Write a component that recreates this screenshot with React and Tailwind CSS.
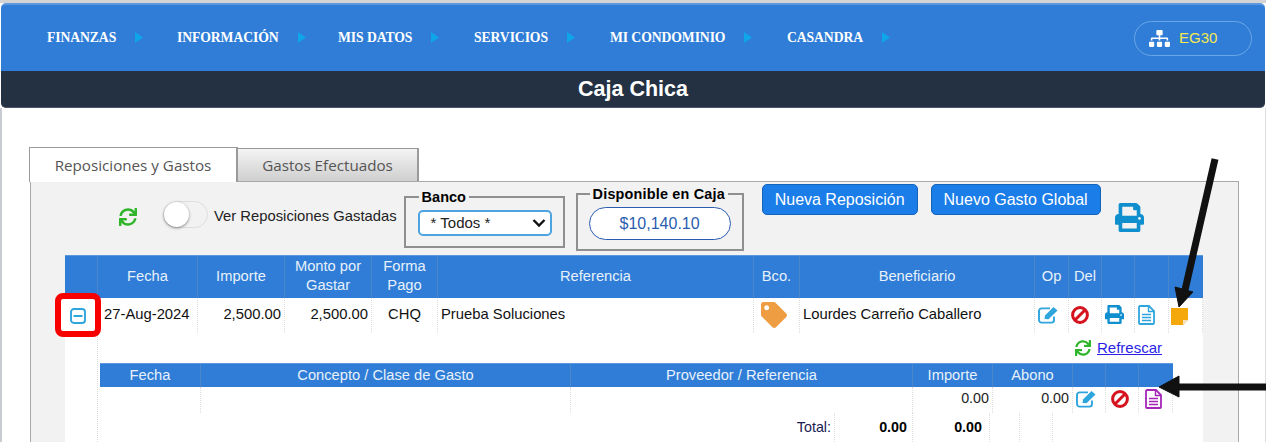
import React from "react";
import { FaSync, FaSitemap, FaPrint, FaTag } from "react-icons/fa";

const nav = [
  ["FINANZAS", "w-[130px]"],
  ["INFORMACIÓN", "w-[161px]"],
  ["MIS DATOS", "w-[136px]"],
  ["SERVICIOS", "w-[136px]"],
  ["MI CONDOMINIO", "w-[177px]"],
  ["CASANDRA", "w-[110px]"],
];

const div = "border-r border-dotted border-[#dcdcdc] pb-[2px]";
const hdiv = "border-r border-[#4a86c9] flex items-center justify-center text-center pb-[2px]";

function Head({ children, cls = "" }) {
  return <div className={`${hdiv} ${cls}`}>{children}</div>;
}

function Cell({ children, cls = "" }) {
  return <div className={`${div} flex items-center ${cls}`}>{children}</div>;
}

function EditIcon({ cls = "" }) {
  return (
    <svg width="21" height="18" viewBox="0 0 21 18" className={`text-[#2fa5dd] ${cls}`}>
      <path d="M16 10.5V14a2.6 2.6 0 0 1-2.6 2.6H3.6A2.6 2.6 0 0 1 1 14V5a2.6 2.6 0 0 1 2.6-2.6H12" fill="none" stroke="currentColor" strokeWidth="1.9" />
      <path d="M6.5 13L7 9.5L15.5 1L19.5 4.5L10.5 13.2Z" fill="currentColor" />
    </svg>
  );
}

function BanIcon({ cls = "" }) {
  return (
    <svg width="18" height="18" viewBox="0 0 18 18" className={`text-[#d5121e] ${cls}`}>
      <circle cx="9" cy="9" r="7.4" fill="none" stroke="currentColor" strokeWidth="3" />
      <path d="M4 14L14 4" stroke="currentColor" strokeWidth="3" />
    </svg>
  );
}

function FileIcon({ cls = "" }) {
  return (
    <svg width="17" height="20" viewBox="0 0 17 20" className={cls}>
      <path d="M1.9 1H11L16 6V18A1 1 0 0 1 15 19H2A1 1 0 0 1 1 18V1.9Z" fill="none" stroke="currentColor" strokeWidth="1.8" />
      <path d="M10.5 1V6.5H16" fill="none" stroke="currentColor" strokeWidth="1.4" />
      <path d="M4 9.5H13M4 12.5H13M4 15.5H13" stroke="currentColor" strokeWidth="1.5" />
    </svg>
  );
}

export default function App() {
  return (
    <div className="relative w-[1266px] h-[442px] overflow-hidden bg-white text-[14.8px] text-[#1a1a2a] font-['Liberation_Sans',Arial,sans-serif]">
      <div className="h-[3px] bg-[#d4d4d4]" />
      <div className="mx-px">
        <div className="h-[68px] flex items-center pl-[46px] pr-[13px] bg-[#2f7dd6] rounded-t-[5px] border-t-2 border-[#5b98df]">
          {nav.map(([t, w]) => (
            <div key={t} className={`${w} flex items-center text-white font-bold text-[13.7px] tracking-[-0.1px] font-['Liberation_Serif',serif]`}>
              <span>{t}</span>
              <svg width="8" height="11" viewBox="0 0 8 11" className="ml-[19px]">
                <path d="M0 0L8 5.5L0 11Z" fill="#0ea5e9" />
              </svg>
            </div>
          ))}
          <div className="ml-auto w-[118px] h-[35px] border border-[#6ba6e8] rounded-full flex items-center pl-[14px] gap-[9px]">
            <FaSitemap className="text-white text-[21px]" />
            <span className="text-[#f5e94f] text-[15px] mt-[1px]">EG30</span>
          </div>
        </div>
        <div className="h-[37px] bg-[#233143] rounded-b-[5px] border-b border-[#4a5566] flex items-center justify-center text-white font-bold text-[21.5px]">
          Caja Chica
        </div>
      </div>

      <div className="border-l-2 border-[#c9ccd2] border-r border-r-[#dddddd] h-[334px] pl-[27px] pr-[27px]">
        <div className="flex items-end pt-[38px] h-[73px]">
          <div className="w-[209px] h-[35px] bg-white border-t border-l border-r-2 border-[#9a9a9a] flex items-center justify-center text-[15.2px] text-[#555] font-['Open_Sans',sans-serif] relative z-10 mb-[-1px]">
            Reposiciones y Gastos
          </div>
          <div className="w-[181px] h-[33px] bg-gradient-to-b from-[#f4f4f4] to-[#cfcfcf] border-t border-r-2 border-[#9a9a9a] flex items-center justify-center text-[15.2px] text-[#555] font-['Open_Sans',sans-serif]">
            Gastos Efectuados
          </div>
        </div>

        <div className="w-[1209px] h-[262px] bg-[#f2f2f2] border border-[#a9a9a9] border-b-0 ml-px">
          <div className="flex items-start h-[73px]">
            <FaSync className="ml-[88px] mt-[26px] text-[#2fb52a] text-[18px] shrink-0" />
            <div className="ml-[26px] mt-[19px] w-[45px] h-[27px] rounded-full border border-[#dddddd] bg-[#f2f2f2] relative shrink-0">
              <div className="absolute left-0 top-0 w-[25px] h-[25px] rounded-full bg-white shadow-[0_1px_3px_rgba(0,0,0,0.45)]" />
            </div>
            <span className="ml-[6px] mt-[23px] whitespace-nowrap text-[#222]">Ver Reposiciones Gastadas</span>

            <fieldset className="ml-[7px] mt-[7px] w-[161px] h-[59px] border-2 border-[#8f8f8f] pl-[12px] pr-[11px]">
              <legend className="px-[3px] ml-[1px] font-bold text-[14.5px] leading-[16px] text-black">Banco</legend>
              <div className="mt-[5px] h-[26px] bg-white border-2 border-[#4da3e0] rounded-[5px] flex items-center justify-between pl-[11px] pr-[4px] text-[15px] text-[#222]">
                <span>* Todos *</span>
                <svg width="14" height="10" viewBox="0 0 14 10"><path d="M1.5 2 L7 7.5 L12.5 2" fill="none" stroke="#111" strokeWidth="2.4" /></svg>
              </div>
            </fieldset>

            <fieldset className="ml-[11px] mt-[4px] w-[168px] h-[65px] border-2 border-[#8f8f8f] px-[11px]">
              <legend className="px-[3px] ml-[1px] font-bold text-[14.4px] leading-[16px] text-black tracking-[0.2px] whitespace-nowrap">Disponible en Caja</legend>
              <div className="mt-[5px] h-[33px] bg-white border-[1.5px] border-[#2a5db0] rounded-full flex items-center justify-center text-[16px] text-[#2a5db0]">
                $10,140.10
              </div>
            </fieldset>

            <div className="ml-[18px] mt-[2px] w-[156px] h-[31px] bg-[#1a7de8] border border-[#1564bb] rounded-[5px] flex items-center justify-center text-white text-[16px]">
              Nueva Reposición
            </div>
            <div className="ml-[13px] mt-[2px] w-[170px] h-[31px] bg-[#1a7de8] border border-[#1564bb] rounded-[5px] flex items-center justify-center text-white text-[16px]">
              Nuevo Gasto Global
            </div>
            <FaPrint className="ml-[14px] mt-[21px] text-[#0f8fce] text-[29px] shrink-0" />
          </div>

          <div className="ml-[34px] w-[1138px] bg-white h-[189px]">
            <div className="grid grid-cols-[33px_100px_87px_87px_66px_316px_46px_235px_34px_33px_33px_34px_34px] h-[43px] bg-[#2f7dd6] border-t border-[#5b98df] text-[#e8f1fb] text-[14.7px] leading-[19px]">
              <Head />
              <Head>Fecha</Head>
              <Head>Importe</Head>
              <Head>Monto por<br />Gastar</Head>
              <Head>Forma<br />Pago</Head>
              <Head>Referencia</Head>
              <Head>Bco.</Head>
              <Head>Beneficiario</Head>
              <Head>Op</Head>
              <Head>Del</Head>
              <Head />
              <Head />
              <div />
            </div>

            <div className="grid grid-cols-[33px_100px_87px_87px_66px_316px_46px_235px_34px_33px_33px_34px_34px] h-[35px] text-[#111]">
              <div className="flex items-center pl-[5px]">
                <svg width="16" height="16" viewBox="0 0 16 16" className="relative z-10 text-[#2fa5dd]">
                  <rect x="1" y="1" width="14" height="14" rx="3" fill="none" stroke="currentColor" strokeWidth="1.9" />
                  <path d="M3.5 8H12.5" stroke="currentColor" strokeWidth="2" />
                </svg>
              </div>
              <Cell cls="pl-[6px]">27-Aug-2024</Cell>
              <Cell cls="justify-end pr-[3px]">2,500.00</Cell>
              <Cell cls="justify-end pr-[3px]">2,500.00</Cell>
              <Cell cls="justify-center">CHQ</Cell>
              <Cell cls="pl-[3px]">Prueba Soluciones</Cell>
              <Cell cls="pl-[7px]"><FaTag className="text-[#ee9d42] text-[26px]" /></Cell>
              <Cell cls="pl-[3px]">Lourdes Carreño Caballero</Cell>
              <Cell cls="pl-[3px]"><EditIcon /></Cell>
              <Cell cls="pl-[2px]"><BanIcon /></Cell>
              <Cell cls="pl-[3px]"><FaPrint className="text-[#0f8fce] text-[19px]" /></Cell>
              <Cell cls="pl-[3px]"><FileIcon cls="text-[#2fa5dd]" /></Cell>
              <Cell cls="pl-[2px] pt-[3px]">
                <svg width="17" height="17" viewBox="0 0 17 17">
                  <path d="M0 0H17V12L12 17H0Z" fill="#f5a80c" />
                  <path d="M12 17V12H17Z" fill="#f3e3c3" />
                </svg>
              </Cell>
            </div>

            <div className="flex h-[111px]">
              <div className="w-[33px] border-r border-dotted border-[#dcdcdc]" />
              <div className="flex-1 min-w-0">
                <div className="h-[30px] flex items-center pl-[977px] gap-[5px]">
                  <FaSync className="text-[#2fb52a] text-[16px]" />
                  <a className="text-[#2a1fe6] underline text-[15px] ml-[1px]">Refrescar</a>
                </div>
                <div className="ml-[2px] w-[1073px]">
                  <div className="grid grid-cols-[101px_370px_342px_80px_80px_33px_33px_34px] h-[24px] bg-[#2f7dd6] border-t border-[#5b98df] text-[#e8f1fb] text-[14.7px]">
                    <Head>Fecha</Head>
                    <Head>Concepto / Clase de Gasto</Head>
                    <Head>Proveedor / Referencia</Head>
                    <Head>Importe</Head>
                    <Head>Abono</Head>
                    <Head />
                    <Head />
                    <div />
                  </div>
                  <div className="grid grid-cols-[101px_370px_342px_80px_80px_33px_33px_34px] h-[26px] text-[14.3px] text-[#222]">
                    <Cell />
                    <Cell />
                    <Cell />
                    <Cell cls="justify-end pr-[3px]">0.00</Cell>
                    <Cell cls="justify-end pr-[3px]">0.00</Cell>
                    <Cell cls="pl-[3px]"><EditIcon /></Cell>
                    <Cell cls="pl-[5px]"><BanIcon /></Cell>
                    <Cell cls="pl-[6px]"><FileIcon cls="text-[#a326b8]" /></Cell>
                  </div>
                  <div className="grid grid-cols-[735px_78px_77px_30px_33px] h-[31px] text-[14.3px]">
                    <Cell cls="justify-end pr-[3px] text-[#1a2050]">Total:</Cell>
                    <Cell cls="justify-end pr-[5px] font-bold text-black">0.00</Cell>
                    <Cell cls="justify-end pr-[7px] font-bold text-black">0.00</Cell>
                    <Cell />
                    <Cell />
                  </div>
                </div>
              </div>
            </div>
          </div>
        </div>
      </div>

      {/* Annotations lying over the page */}
      <div className="absolute left-[55px] top-[293px] w-[46px] h-[44px] rounded-[8px] border-[6px] border-[#f80000] bg-white" />
      <svg className="absolute left-0 top-0 pointer-events-none" width="1266" height="442" viewBox="0 0 1266 442">
        <path d="M1215 159 L1185 290" stroke="#111" strokeWidth="7" fill="none" />
        <path d="M1175 287 L1193 292 L1179 307 Z" fill="#111" stroke="#111" />
        <path d="M1178 387 L1266 387" stroke="#111" strokeWidth="7" fill="none" />
        <path d="M1179 376 L1179 397 L1159 387 Z" fill="#111" stroke="#111" />
      </svg>
    </div>
  );
}
